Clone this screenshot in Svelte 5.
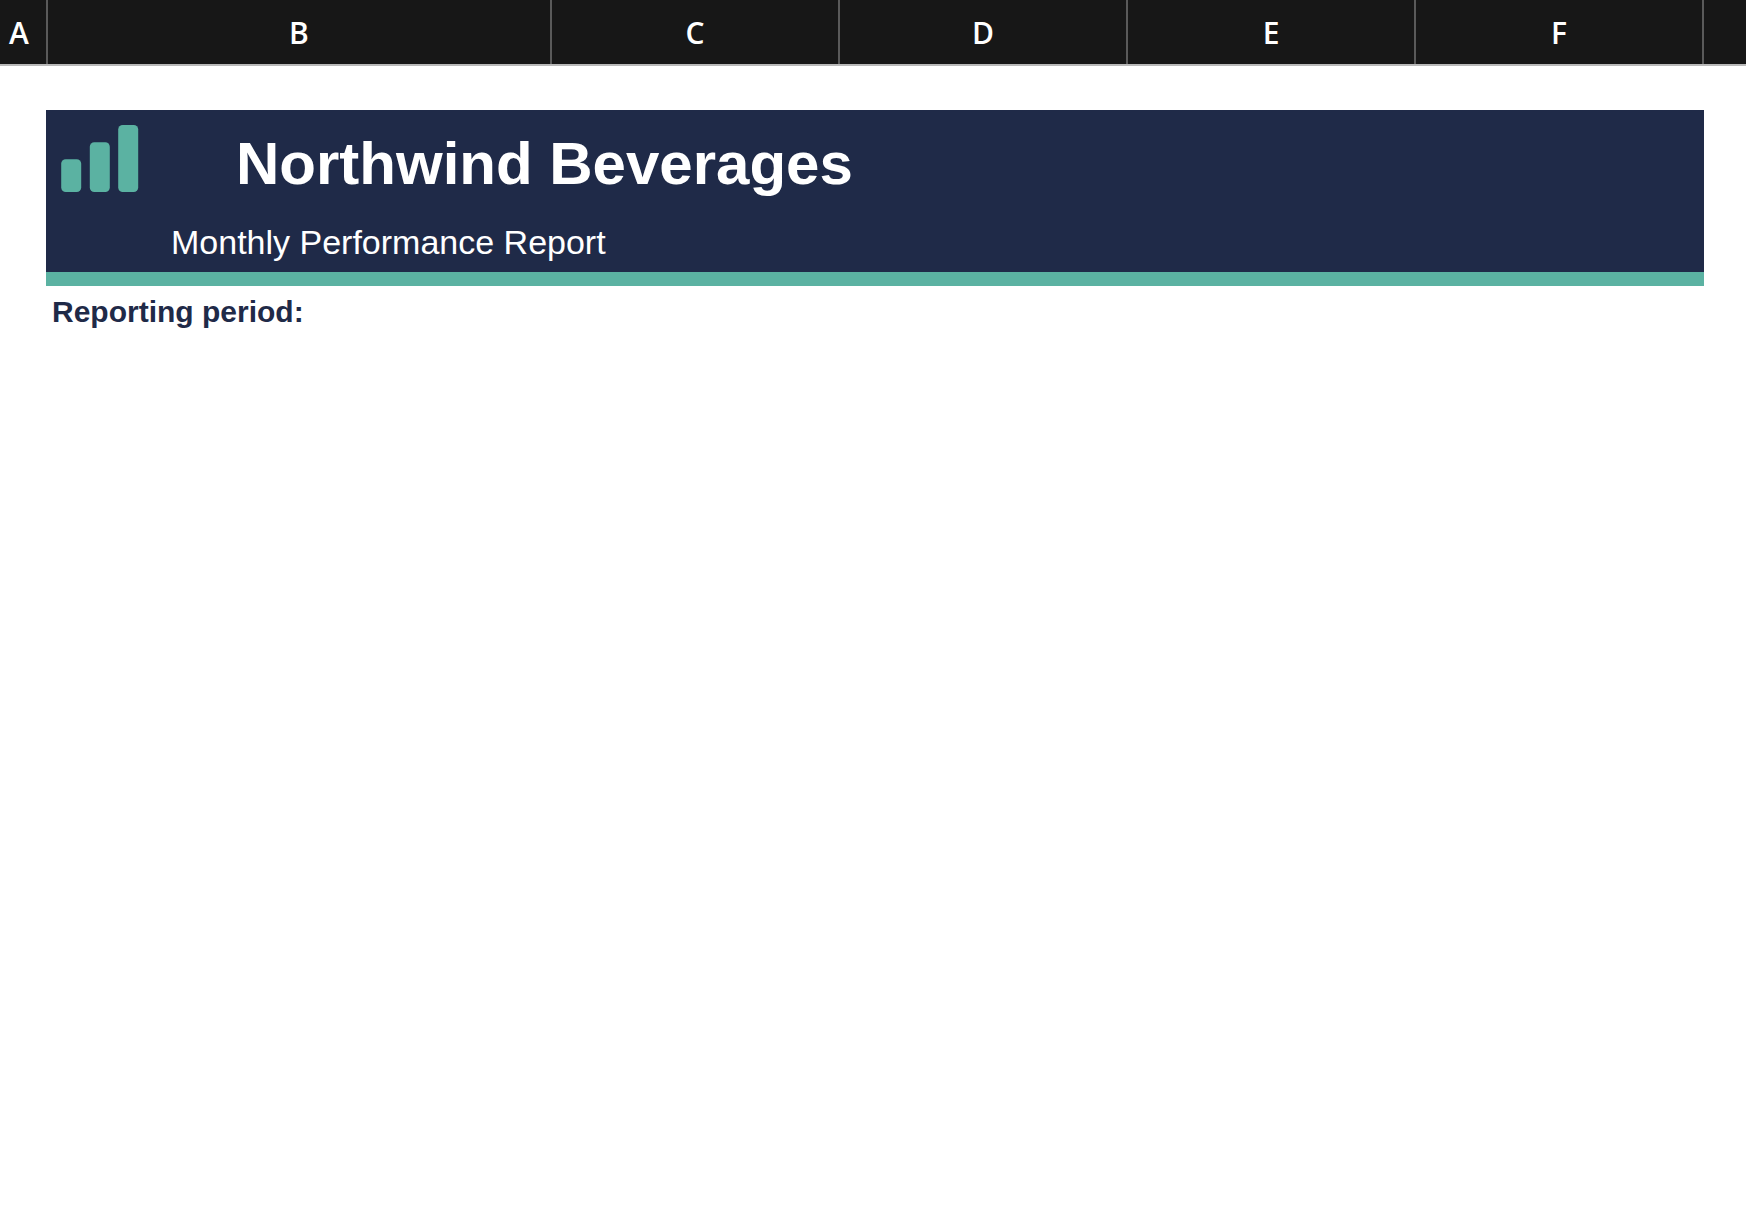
<script lang="ts">
	const columns = ['A', 'B', 'C', 'D', 'E', 'F', ''];

	type Report = {
		company: string;
		subtitle: string;
	};

	const report: Report = {
		company: 'Northwind Beverages',
		subtitle: 'Monthly Performance Report'
	};
</script>

<svelte:head>
	<title>{report.company}</title>
</svelte:head>

<div class="columns">
	{#each columns as column}
		<div class="column">{column}</div>
	{/each}
</div>

<main>
	<header>
		<div class="brand">
			<svg class="logo" width="78" height="68" viewBox="0 0 78 68" aria-hidden="true">
				<rect x="0.2" y="34.2" width="20" height="32.8" rx="4.5" />
				<rect x="28.8" y="17.2" width="20" height="49.8" rx="4.5" />
				<rect x="57.2" y="0" width="20" height="67" rx="4.5" />
			</svg>
			<h1>{report.company}</h1>
		</div>
		<p class="subtitle">{report.subtitle}</p>
	</header>
	<h2>Reporting period:</h2>
</main>

<style>
	:global(body) {
		margin: 0;
		background: #fff;
	}

	.columns {
		display: grid;
		grid-template-columns: 48px minmax(0, 7fr) repeat(4, minmax(0, 4fr)) 42px;
		height: 64px;
		background: #171717;
		border-bottom: 2px solid #b9b9b9;
	}

	.column {
		padding-top: 2px;
		border-right: 2px solid #5a5a5a;
		color: #fff;
		font-family: 'Open Sans', 'Noto Sans', sans-serif;
		font-size: 30px;
		font-weight: 600;
		line-height: 62px;
		text-align: center;
	}

	.column:first-child {
		padding-right: 8px;
	}

	.column:last-child {
		border-right: none;
	}

	main {
		padding: 44px 42px 0 46px;
		font-family: 'Liberation Sans', Arial, sans-serif;
	}

	header {
		background: #1f2a48;
		border-bottom: 14px solid #5bb2a2;
		color: #fff;
	}

	.brand {
		display: flex;
		align-items: flex-start;
		gap: 97px;
		height: 108px;
		padding-left: 15px;
		box-sizing: border-box;
	}

	.logo {
		flex: none;
		margin-top: 15px;
		fill: #5bb2a2;
	}

	h1 {
		margin: 0;
		font-size: 60px;
		line-height: 108px;
	}

	.subtitle {
		margin: 0;
		padding-left: 125px;
		font-size: 34px;
		line-height: 48px;
		padding-bottom: 6px;
	}

	h2 {
		margin: 0;
		padding-left: 6px;
		color: #1f2a48;
		font-size: 30px;
		line-height: 52px;
	}
</style>
